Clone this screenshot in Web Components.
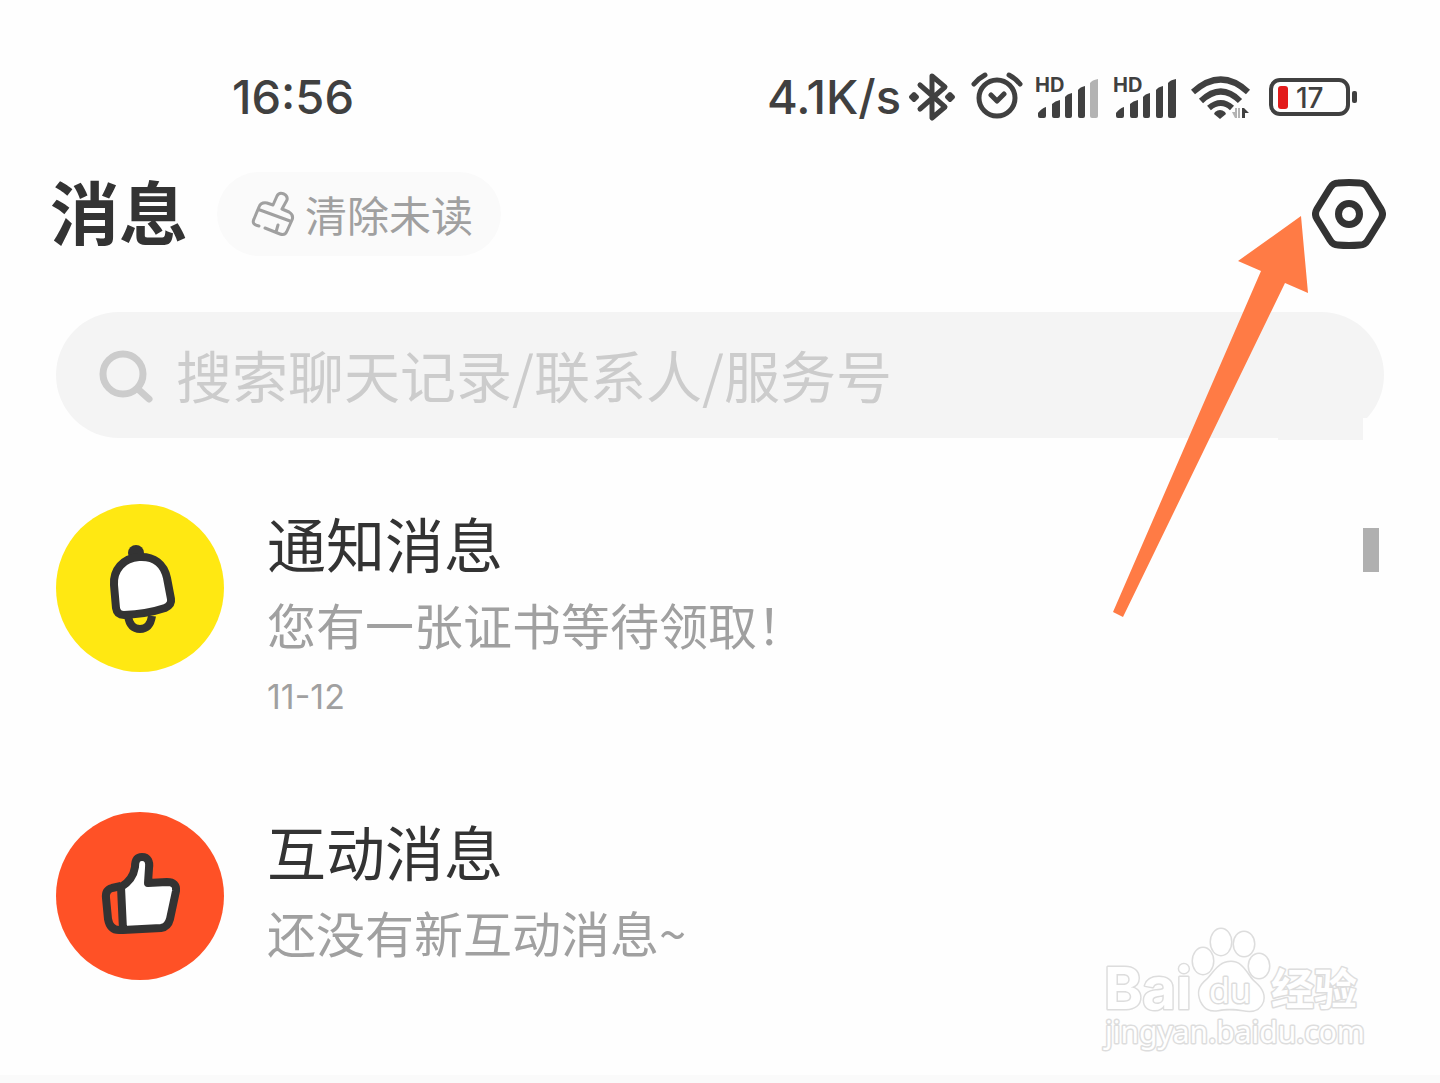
<!DOCTYPE html>
<html lang="zh-CN">
<head>
<meta charset="utf-8">
<meta name="viewport" content="width=device-width, initial-scale=1">
<title>消息</title>
<style>
  body {
    margin: 0;
    background: #fefefe;
    color: #333;
    font-family: Inter, "Noto Sans CJK SC", sans-serif;
  }
</style>
</head>
<body>
<message-page>
  <status-bar slot="status" time="16:56" speed="4.1K/s" battery="17"></status-bar>
  <page-header slot="header">消息<span slot="action">清除未读</span></page-header>
  <search-box slot="search" placeholder="搜索聊天记录/联系人/服务号"></search-box>
  <message-item icon="bell" marked>
    <span slot="title">通知消息</span>
    您有一张证书等待领取！
    <time slot="date">11-12</time>
  </message-item>
  <message-item icon="thumb">
    <span slot="title">互动消息</span>
    还没有新互动消息~
  </message-item>
  <pointer-arrow slot="overlay"></pointer-arrow>
  <site-watermark slot="overlay"></site-watermark>
</message-page>

<script>
function attach(el, html) {
  const root = el.attachShadow({ mode: 'open' });
  root.innerHTML = html;
  return root;
}

// 页面骨架
class MessagePage extends HTMLElement {
  constructor() {
    super();
    attach(this, `
<style>
  :host {
    display: flex;
    flex-direction: column;
    position: relative;
    min-height: 100vh;
    overflow: hidden;
  }
  main {
    display: flex;
    flex-direction: column;
    gap: 84px;
    padding: 66px 56px 48px;
  }
  footer {
    height: 8px;
    margin-top: auto;
    background: #fafafa;
  }
</style>
<slot name="status"></slot>
<slot name="header"></slot>
<slot name="search"></slot>
<main><slot></slot></main>
<footer></footer>
<slot name="overlay"></slot>`);
  }
}

// 信号格，末格可置灰
const signalIcon = last => `
<svg width="64" height="44" viewBox="0 0 64 44">
  <text x="0" y="17" font-size="20" font-weight="700">HD</text>
  <path d="M3 41V38Q7 33 11 32V41Q11 43 9 43H5Q3 43 3 41Z M17 41V29Q20 26 25 25V41Q25 43 23 43H19Q17 43 17 41Z M30 41V22Q32 19 37 18V41Q37 43 35 43H32Q30 43 30 41Z M43 41V15Q45 12 50 11V41Q50 43 48 43H45Q43 43 43 41Z"/>
  <path d="M55 41V8Q57 5 63 4V41Q63 43 61 43H57Q55 43 55 41Z" fill="${last}"/>
</svg>`;

class StatusBar extends HTMLElement {
  constructor() {
    super();
    attach(this, `
<style>
  :host {
    display: flex;
    justify-content: space-between;
    align-items: center;
    height: 74px;
    padding: 60px 83px 0 232px;
    color: #404040;
    font-size: 47px;
    font-weight: 500;
    line-height: 74px;
  }
  .icons {
    display: flex;
    align-items: center;
    gap: 14px;
  }
  .speed { margin-right: -6px; }
  svg { display: block; overflow: visible; fill: currentColor; }
  .line { fill: none; stroke: currentColor; stroke-linecap: round; stroke-linejoin: round; }
</style>
<span class="time"></span>
<div class="icons">
  <span class="speed"></span>
  <svg width="48" height="50" viewBox="0 0 48 50">
    <path class="line" stroke-width="5" d="M11 13 36 35 23 46V4L36 15 11 37"/>
    <path stroke="currentColor" stroke-width="4" stroke-linejoin="round" d="M5 22 8 25 5 28 2 25ZM41 22 44 25 41 28 38 25Z"/>
  </svg>
  <svg width="50" height="50" viewBox="0 0 50 50">
    <g class="line" stroke-width="5">
      <circle cx="26" cy="26" r="18"/>
      <path d="M20 23 26 29 33 22M3 12Q8 6 14 3M38 3Q44 6 49 12"/>
    </g>
  </svg>
  ${signalIcon('#b3b3b3')}
  ${signalIcon('currentColor')}
  <svg width="60" height="44" viewBox="0 0 60 44">
    <g fill="none" stroke="currentColor" stroke-width="6">
      <path d="M2 17Q30-8 57 17M10 26Q30 7 49 26M18 33Q30 23 41 33"/>
    </g>
    <path d="M24 37Q29 33 34 37L35 39 29 44 23 39Z"/>
    <path fill="#b3b3b3" d="M41 37H44V33H46V43H44ZM47 33H49V43H47Z"/>
    <path d="M51 43V33H53L58 38H54V43Z"/>
  </svg>
  <svg width="92" height="40" viewBox="-4 0 92 40">
    <rect x="2" y="3" width="77" height="34" rx="9" fill="none" stroke="currentColor" stroke-width="4"/>
    <rect x="9" y="9" width="10" height="23" rx="3" fill="#e31b1b"/>
    <rect x="83" y="14" width="5" height="12" rx="2"/>
    <text class="battery" x="27" y="31" font-size="28"></text>
  </svg>
</div>`);
  }

  connectedCallback() {
    for (const name of ['time', 'speed', 'battery']) {
      this.shadowRoot.querySelector('.' + name).textContent = this.getAttribute(name);
    }
  }
}

class PageHeader extends HTMLElement {
  constructor() {
    super();
    attach(this, `
<style>
  :host {
    display: flex;
    align-items: center;
    height: 84px;
    padding: 38px 54px 0 50px;
    font-family: "Noto Sans CJK SC", sans-serif;
  }
  h1 {
    margin: 0 29px 8px 0;
    font-size: 69px;
    font-weight: 700;
    line-height: 80px;
  }
  button {
    border: none;
    padding: 0;
    background: none;
    color: inherit;
    font: inherit;
    cursor: pointer;
  }
  .clear {
    display: flex;
    align-items: center;
    gap: 9px;
    height: 84px;
    padding: 0 28px 0 33px;
    border-radius: 42px;
    background: #fafafa;
    color: #a0a0a0;
    font-size: 42px;
    line-height: 84px;
  }
  .settings { margin-left: auto; }
  svg { display: block; fill: none; stroke: currentColor; stroke-linecap: round; stroke-linejoin: round; }
</style>
<h1><slot></slot></h1>
<button class="clear">
  <svg width="46" height="48" viewBox="0 0 46 48" stroke-width="3">
    <path d="M9 36C4 35 2 33 4 29L9 17Q11 12 17 13L23 15 27 6Q29 2 34 4 38 6 37 10L32 19 39 22Q44 25 42 30L37 41Q35 46 30 44L15 38M10 20 40 31M28 35 26 42"/>
  </svg>
  <slot name="action"></slot>
</button>
<button class="settings" aria-label="设置">
  <svg width="74" height="70" viewBox="0 0 74 70">
    <path stroke-width="7" d="M26 4Q37 3 48 4 53 4 56 9L69 30Q72 35 69 40L56 61Q53 66 48 66 37 67 26 66 21 66 18 61L5 40Q2 35 5 30L18 9Q21 4 26 4Z"/>
    <circle cx="37" cy="35" r="10.5" stroke-width="7"/>
  </svg>
</button>`);
  }
}

class SearchBox extends HTMLElement {
  constructor() {
    super();
    attach(this, `
<style>
  :host {
    display: block;
    position: relative;
    margin: 56px 56px 0;
  }
  label {
    display: flex;
    align-items: center;
    gap: 22px;
    height: 126px;
    padding: 0 42px;
    border-radius: 63px;
    background: #f4f4f4;
    color: #ccc;
  }
  svg { flex: none; fill: none; stroke: currentColor; stroke-width: 7; stroke-linecap: round; }
  input {
    flex: 1;
    min-width: 0;
    height: 84px;
    margin: 0 0 4px;
    padding: 0;
    border: none;
    outline: none;
    background: none;
    color: #333;
    font-family: "Noto Sans CJK SC", sans-serif;
    font-size: 56px;
  }
  input::placeholder { color: #ccc; opacity: 1; }
  /* 右下角的方形缺口 */
  .notch {
    position: absolute;
    right: 0;
    bottom: -2px;
    width: 106px;
    height: 22px;
    background: linear-gradient(to right, #f4f4f4 85px, #fefefe 85px);
  }
</style>
<label>
  <svg width="56" height="56" viewBox="0 0 56 56">
    <circle cx="25" cy="27" r="20"/>
    <path d="M41 43 51 52"/>
  </svg>
  <input type="text" aria-label="搜索">
</label>
<div class="notch"></div>`);
  }

  connectedCallback() {
    this.shadowRoot.querySelector('input').placeholder = this.getAttribute('placeholder');
  }
}

const avatars = {
  bell: `
<svg width="168" height="168" viewBox="0 0 168 168">
  <circle cx="84" cy="84" r="84" fill="#ffe812"/>
  <circle cx="80" cy="49" r="8" fill="#333"/>
  <g stroke="#333" stroke-width="8" stroke-linejoin="round">
    <path fill="none" d="M72 112Q74 125 84 125 94 125 96 112"/>
    <path fill="#fff" d="M60 104Q61 111 68 111 91 110 109 104 116 101 115 95L111 74C108 60 98 52 83 53 67 54 57 66 58 81Z"/>
  </g>
</svg>`,
  thumb: `
<svg width="168" height="168" viewBox="0 0 168 168">
  <circle cx="84" cy="84" r="84" fill="#ff5126"/>
  <g stroke="#333" stroke-width="8" stroke-linejoin="round">
    <path fill="none" d="M65 74 56 76Q49 78 50 86L52 107Q54 118 63 118L68 118"/>
    <path fill="#fff" d="M65 75Q77 68 79 55C79 48 81 45 86 45 92 45 94 50 93 56L92 71 111 70Q121 70 120 79L114 107Q112 115 105 116L67 118Z"/>
  </g>
</svg>`
};

class MessageItem extends HTMLElement {
  constructor() {
    super();
    attach(this, `
<style>
  :host { display: block; }
  article {
    display: flex;
    align-items: flex-start;
    gap: 43px;
  }
  .avatar { flex: none; }
  .avatar svg { display: block; }
  .body { flex: 1; min-width: 0; font-family: "Noto Sans CJK SC", sans-serif; }
  h2 {
    margin: 0;
    font-size: 59px;
    font-weight: 400;
    line-height: 78px;
  }
  p {
    margin: 0;
    color: #a0a0a0;
    font-size: 49px;
    line-height: 84px;
  }
  .date {
    color: #a0a0a0;
    font-family: Inter, sans-serif;
    font-size: 34px;
    line-height: 62px;
  }
  .mark {
    display: none;
    width: 16px;
    height: 44px;
    margin: 24px 5px 0 0;
    background: #b0b0b0;
  }
  :host([marked]) .mark { display: block; }
</style>
<article>
  <div class="avatar"></div>
  <div class="body">
    <h2><slot name="title"></slot></h2>
    <p><slot></slot></p>
    <div class="date"><slot name="date"></slot></div>
  </div>
  <div class="mark"></div>
</article>`);
  }

  connectedCallback() {
    this.shadowRoot.querySelector('.avatar').innerHTML = avatars[this.getAttribute('icon')];
  }
}

// 指向设置按钮的箭头
class PointerArrow extends HTMLElement {
  constructor() {
    super();
    attach(this, `
<style>
  :host {
    position: absolute;
    top: 216px;
    right: 132px;
    pointer-events: none;
  }
  svg { display: block; }
</style>
<svg width="195" height="401" viewBox="0 0 195 401">
  <path fill="#ff7b45" d="M188 0 125 45 148 55 0 396 10 401 172 67 195 77Z"/>
</svg>`);
  }
}

class SiteWatermark extends HTMLElement {
  constructor() {
    super();
    attach(this, `
<style>
  :host {
    position: absolute;
    right: 70px;
    bottom: 24px;
    pointer-events: none;
  }
  svg {
    display: block;
    fill: #fff;
    stroke: #ddd;
    stroke-width: 3;
    stroke-linejoin: round;
    paint-order: stroke;
  }
</style>
<svg width="270" height="136" viewBox="0 0 270 136">
  <text x="4" y="86" font-family="Inter, sans-serif" font-size="58" font-weight="700">Bai</text>
  <g stroke-width="3">
    <ellipse cx="103" cy="38" rx="10" ry="13"/>
    <ellipse cx="121" cy="19" rx="10" ry="13"/>
    <ellipse cx="144" cy="21" rx="10" ry="12"/>
    <ellipse cx="159" cy="43" rx="10" ry="12"/>
    <path d="M131 39C120 39 115 48 108 56 98 64 98 70 101 78 105 86 110 88 118 87 128 85 136 86 143 87 153 89 160 87 163 78 165 70 160 64 153 58 146 50 142 39 131 39Z"/>
  </g>
  <text x="109" y="80" font-family="Noto Sans, sans-serif" font-size="34">du</text>
  <text x="171" y="82" font-family="Noto Sans CJK SC, sans-serif" font-size="43" font-weight="700">经验</text>
  <text x="5" y="120" font-family="Noto Sans, sans-serif" font-size="30">jingyan.baidu.com</text>
</svg>`);
  }
}

customElements.define('message-page', MessagePage);
customElements.define('status-bar', StatusBar);
customElements.define('page-header', PageHeader);
customElements.define('search-box', SearchBox);
customElements.define('message-item', MessageItem);
customElements.define('pointer-arrow', PointerArrow);
customElements.define('site-watermark', SiteWatermark);
</script>
</body>
</html>
